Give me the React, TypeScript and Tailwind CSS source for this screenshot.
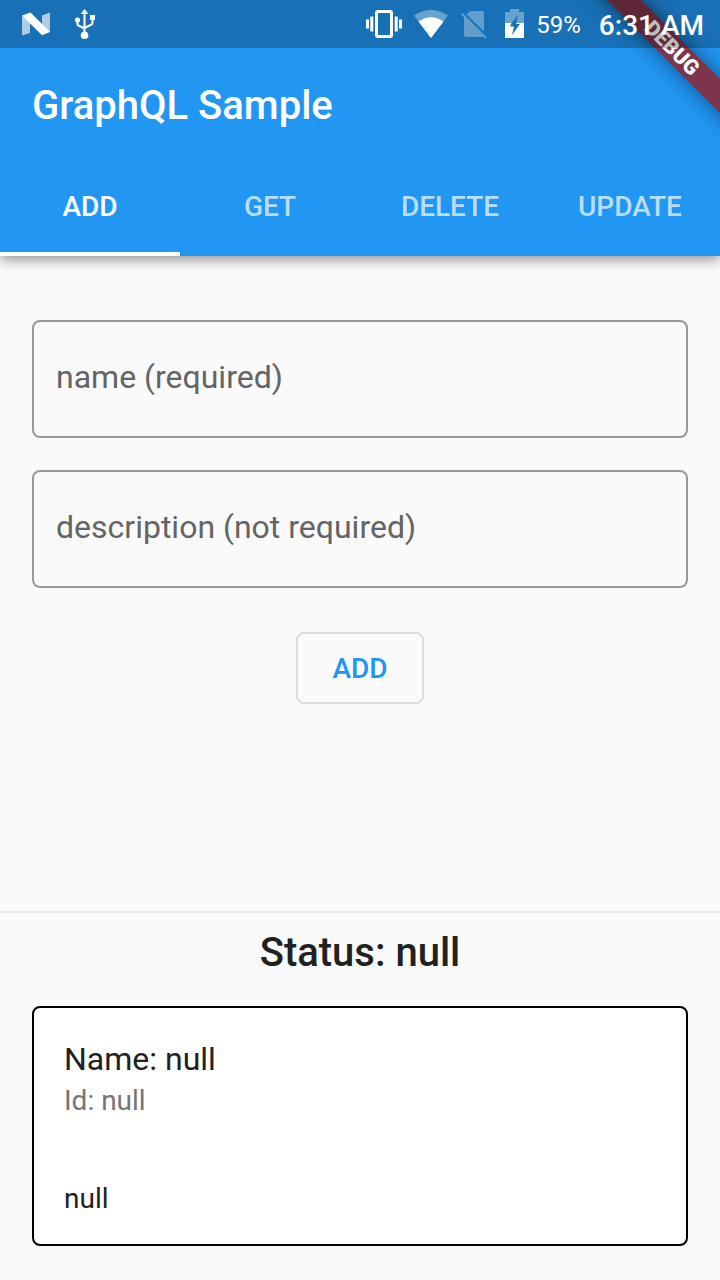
import { useState } from "react";

const tabs = ["ADD", "GET", "DELETE", "UPDATE"];

function StatusBar() {
  return (
    <div className="relative z-20 flex h-12 items-center justify-between bg-black/25 pr-4 pl-5 text-white">
      <div className="flex items-center gap-5">
        <svg className="h-12 w-8" viewBox="20 0 32 48" fill="white" aria-hidden="true">
          <path d="M22 15.5l8 7V33l-8 2.5zM50 12.5v20l-8-7V15.5z" opacity=".65" />
          <path d="M22 15.5l8.5-3L50 32l-8 3.2z" />
        </svg>
        <svg className="h-12 w-6" viewBox="72 0 24 48" fill="none" stroke="white" strokeWidth="2" aria-hidden="true">
          <path d="M84.500 12v22M77.500 20v4q0 1 1 1.500l6 3M92.500 18v5q0 1-1 1.500l-7 3.500" />
          <path d="M84.500 9l3.800 5h-7.600zM90 15h5v5h-5z" fill="white" stroke="none" />
          <circle cx="77.500" cy="20" r="2.600" fill="white" stroke="none" />
          <circle cx="84.500" cy="35.300" r="3.800" fill="white" stroke="none" />
        </svg>
      </div>
      <div className="flex items-center">
        <svg className="h-12 w-10" viewBox="364 0 40 48" aria-hidden="true">
          <rect x="376.500" y="11.500" width="15" height="25" rx="1.500" fill="none" stroke="white" strokeWidth="3" />
          <path d="M366 19.500h3v9h-3zM370.300 16.500h3v15h-3zM394.700 16.500h3v15h-3zM399 19.500h3v9h-3z" fill="white" />
        </svg>
        <svg className="ml-2 h-12 w-10" viewBox="412 0 40 48" fill="white" aria-hidden="true">
          <path d="M414 15.500Q431 4.500 448 15.500L431 38z" opacity=".35" />
          <path d="M418.500 21.500Q431 13 443.500 21.500L431 38z" />
        </svg>
        <svg className="ml-2 h-12 w-8" viewBox="460 0 32 48" aria-hidden="true">
          <g opacity=".32">
            <path d="M470 11h12q2 0 2 2v18.500L466.500 14.500zM464 16.800L483 36q-.5 1-2 1h-15q-2 0-2-2z" fill="white" />
            <path d="M461.500 13.500L486 38" stroke="white" strokeWidth="2" />
          </g>
        </svg>
        <svg className="ml-2 h-12 w-8" viewBox="500 0 32 48" fill="white" aria-hidden="true">
          <path d="M505 12h5V9h9v3h5v11h-8l2-8-8 10h-5z" opacity=".35" />
          <path d="M505 23h6.500l-1.500 3.500h4l-2 8.500 8-11h-4l.5-1h7.500v15h-19z" />
        </svg>
        <span className="ml-1 pt-0.5 text-2xl">59%</span>
        <span className="ml-[18px] pt-1 text-[28px] leading-9 font-medium">6:31 AM</span>
      </div>
    </div>
  );
}

function DebugRibbon() {
  return (
    <div className="pointer-events-none absolute top-0 right-0 z-10 h-36 w-36 overflow-hidden">
      <div className="absolute top-9 -left-1 flex h-6 w-[200px] rotate-45 items-center justify-center bg-[#7d354b] shadow-[0_0_20px_rgba(0,0,0,0.5)]">
        <span className="text-[21px] leading-6 font-black text-white">DEBUG</span>
      </div>
    </div>
  );
}

export default function App() {
  const [active, setActive] = useState("ADD");

  return (
    <div className="flex min-h-screen flex-col bg-[#fafafa] font-['Roboto',sans-serif] text-[#212121]">
      <header className="relative bg-[#2196f3] text-white shadow-[0_4px_12px_rgba(0,0,0,0.4)]">
        <StatusBar />
        <DebugRibbon />
        <h1 className="flex h-28 items-center px-8 pt-1 text-[40px] leading-12 font-medium">GraphQL Sample</h1>
        <nav className="grid h-24 grid-cols-4" role="tablist">
          {tabs.map((tab) => (
            <button
              key={tab}
              type="button"
              role="tab"
              aria-selected={active === tab}
              onClick={() => setActive(tab)}
              className={`border-b-4 pt-0.5 text-[28px] font-medium ${
                active === tab ? "border-white text-white" : "border-transparent text-white/70"
              }`}
            >
              {tab}
            </button>
          ))}
        </nav>
      </header>

      <main className="flex flex-1 flex-col">
        <form className="flex flex-1 flex-col gap-8 px-8 pt-16" onSubmit={(e) => e.preventDefault()}>
          <input
            type="text"
            aria-label="name (required)"
            placeholder="name (required)"
            className="h-[118px] w-full rounded-lg border-2 border-[#999999] px-[22px] pb-1 text-[32px] placeholder:text-[#646464]"
          />
          <input
            type="text"
            aria-label="description (not required)"
            placeholder="description (not required)"
            className="h-[118px] w-full rounded-lg border-2 border-[#999999] px-[22px] pb-1 text-[32px] placeholder:text-[#646464]"
          />
          <button
            type="submit"
            className="mt-3 h-18 w-32 self-center rounded-lg border-2 border-[#dcdcdc] pt-0.5 text-[28px] font-medium text-[#2196f3]"
          >
            ADD
          </button>
        </form>

        <section className="border-t-2 border-[#e9e9e9] px-8 pt-4 pb-[34px]">
          <h2 className="text-center text-[40px] leading-12 font-medium">Status: null</h2>
          <div className="mt-[29px] rounded-lg border-2 border-black bg-white px-[30px] pt-[31px] pb-[25px]">
            <p className="text-[32px] leading-10">Name: null</p>
            <p className="mt-0.5 text-[28px] leading-10 text-[#757575]">Id: null</p>
            <p className="mt-[58px] text-[28px] leading-10">null</p>
          </div>
        </section>
      </main>
    </div>
  );
}
